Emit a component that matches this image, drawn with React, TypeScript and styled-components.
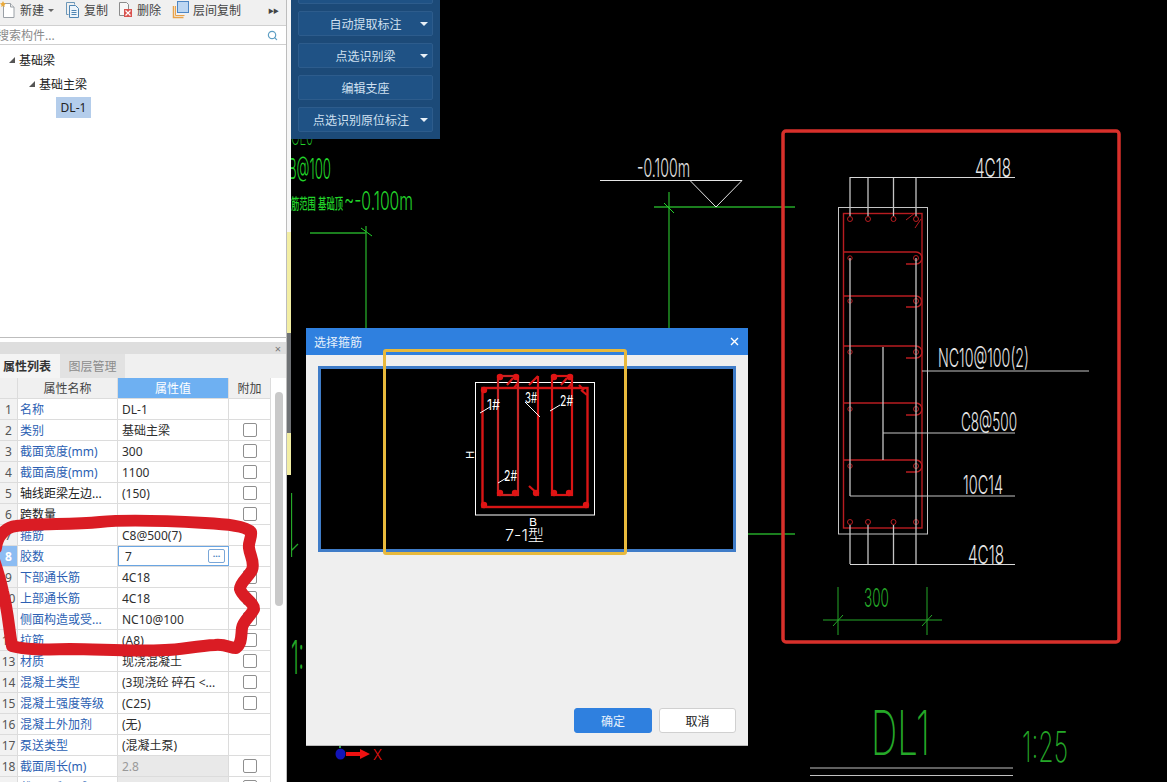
import React from "react";
import styled, { createGlobalStyle } from "styled-components";
import { Search } from "lucide-react";

const UI_FONT = `"Noto Sans", "Noto Sans CJK SC", sans-serif`;
const CAD_FONT = `Inter, "Noto Sans CJK SC", sans-serif`;

const GlobalStyle = createGlobalStyle`
  html, body {
    margin: 0;
    padding: 0;
    width: 1167px;
    height: 782px;
    overflow: hidden;
    background: #000;
    font-family: ${UI_FONT};
    font-size: 12px;
  }
`;

const Page = styled.div`
  position: relative;
  display: flex;
  width: 1167px;
  height: 782px;
  overflow: hidden;
`;

const Sidebar = styled.aside`
  width: 287px;
  height: 782px;
  flex: none;
  display: flex;
  flex-direction: column;
  box-sizing: border-box;
  border-right: 1px solid #bdbdbd;
  background: #fff;
  color: #333;
`;

const Splitter = styled.div`
  width: 4px;
  flex: none;
  background: linear-gradient(
    to bottom,
    #f6f6f6 0 232px,
    #f3eea4 232px 333px,
    #6f7275 333px 433px,
    #f3eea4 433px 475px,
    #000 475px
  );
`;

const Toolbar = styled.div`
  height: 25px;
  flex: none;
  display: flex;
  align-items: center;
  background: #f0f0f0;
  border-bottom: 1px solid #d0d0d0;
`;

const ToolButton = styled.div<{ $width: number }>`
  width: ${(p) => p.$width}px;
  height: 20px;
  margin-bottom: 5px;
  flex: none;
  display: flex;
  align-items: center;
  gap: 3px;
  color: #444;
  white-space: nowrap;
`;

const Caret = styled.span`
  width: 0;
  height: 0;
  margin-left: 1px;
  border-left: 3px solid transparent;
  border-right: 3px solid transparent;
  border-top: 3px solid #666;
`;

const MoreMark = styled.span`
  margin-left: auto;
  margin-right: 8px;
  margin-bottom: 5px;
  font-size: 6px;
  letter-spacing: -1px;
  color: #444;
`;

const SearchRow = styled.div`
  height: 18px;
  flex: none;
  display: flex;
  align-items: center;
  justify-content: space-between;
  padding-right: 8px;
  border-bottom: 1px solid #cfcfcf;
  color: #8a8a8a;
  text-indent: -3px;
`;

const TreePanel = styled.div`
  flex: 1;
  padding-top: 3px;
  border-bottom: 1px solid #bdbdbd;
`;

const TreeRow = styled.div<{ $indent: number }>`
  height: 24px;
  display: flex;
  align-items: center;
  gap: 4px;
  padding-left: ${(p) => p.$indent}px;
  color: #222;
`;

const Twist = styled.span`
  width: 6px;
  height: 6px;
  background: #555;
  clip-path: polygon(100% 0, 100% 100%, 0 100%);
`;

const SelectedNode = styled.span`
  height: 21px;
  width: 35px;
  margin-left: 56px;
  margin-bottom: 1px;
  display: flex;
  align-items: center;
  justify-content: center;
  background: #b4cdeb;
  color: #222;
`;

const PropertyPanel = styled.section`
  height: 440px;
  margin-top: 4px;
  flex: none;
  display: flex;
  flex-direction: column;
  overflow: hidden;
`;

const PanelHead = styled.div`
  height: 12px;
  flex: none;
  display: flex;
  align-items: center;
  justify-content: flex-end;
  padding-right: 5px;
  background: #dedede;
  color: #777;
  font-size: 11px;
`;

const Tabs = styled.div`
  height: 24px;
  flex: none;
  display: flex;
  background: #f0f0f0;
`;

const Tab = styled.div<{ $active?: boolean }>`
  width: ${(p) => (p.$active ? 60 : 65)}px;
  display: flex;
  align-items: center;
  justify-content: ${(p) => (p.$active ? "flex-start" : "center")};
  padding-left: ${(p) => (p.$active ? 3 : 0)}px;
  box-sizing: border-box;
  background: ${(p) => (p.$active ? "#f4f4f4" : "#e2e2e2")};
  color: ${(p) => (p.$active ? "#333" : "#8c8c8c")};
  font-weight: ${(p) => (p.$active ? 700 : 400)};
`;

const TableWrap = styled.div`
  position: relative;
  flex: 1;
  background: #fff;
`;

const Row = styled.div`
  width: 271px;
  height: 21px;
  display: grid;
  grid-template-columns: 18px 100px 111px 42px;
  box-sizing: border-box;
  border-bottom: 1px solid #dcdcdc;
`;

const Cell = styled.div`
  display: flex;
  align-items: center;
  overflow: hidden;
  white-space: nowrap;
  box-sizing: border-box;
  border-right: 1px solid #dcdcdc;
`;

const HeadCell = styled(Cell)<{ $active?: boolean }>`
  justify-content: center;
  background: ${(p) => (p.$active ? "#6eb0f2" : "#f0f0f0")};
  color: ${(p) => (p.$active ? "#fff" : "#444")};
`;

const IndexCell = styled(Cell)<{ $active?: boolean }>`
  justify-content: center;
  background: ${(p) => (p.$active ? "#8cbcf2" : "#f2f2f2")};
  color: ${(p) => (p.$active ? "#fff" : "#555")};
  font-weight: ${(p) => (p.$active ? 700 : 400)};
`;

const NameCell = styled(Cell)<{ $plain?: boolean }>`
  padding-left: 2px;
  color: ${(p) => (p.$plain ? "#222" : "#2c5fb3")};
`;

const ValueCell = styled(Cell)<{ $disabled?: boolean }>`
  padding-left: 4px;
  background: ${(p) => (p.$disabled ? "#e9e9e9" : "#fff")};
  color: ${(p) => (p.$disabled ? "#999" : "#2e2e2e")};
`;

const EditCell = styled(ValueCell)`
  padding-left: 6px;
  justify-content: space-between;
  padding-right: 3px;
  border: 1px solid #6aa5e2;
`;

const EllipsisButton = styled.span`
  width: 15px;
  height: 12px;
  display: flex;
  align-items: center;
  justify-content: center;
  border: 1px solid #7aa7d8;
  border-radius: 2px;
  color: #4a83c0;
  font-size: 9px;
  font-weight: 700;
  line-height: 8px;
`;

const AttachCell = styled(Cell)`
  justify-content: center;
`;

const CheckBox = styled.span`
  width: 12px;
  height: 12px;
  border: 1px solid #8f8f8f;
  border-radius: 2px;
  background: #fff;
`;

const ScrollThumb = styled.div`
  position: absolute;
  left: 275px;
  top: 14px;
  width: 8px;
  height: 214px;
  border-radius: 4px;
  background: #c9c9c9;
`;

const Canvas = styled.main`
  position: relative;
  flex: 1;
  background: #000;
`;

const CadSheet = styled.svg`
  display: block;
  width: 876px;
  height: 782px;
`;

const CommandPanel = styled.div`
  position: absolute;
  left: 0;
  top: 0;
  width: 149px;
  height: 139px;
  box-sizing: border-box;
  padding: 0 7px 7px;
  display: flex;
  flex-direction: column;
  justify-content: flex-end;
  gap: 7px;
  overflow: hidden;
  background: #1c4a78;
`;

const CommandButton = styled.div<{ $nudge?: number }>`
  position: relative;
  height: 25px;
  flex: none;
  display: flex;
  align-items: center;
  justify-content: center;
  box-sizing: border-box;
  padding-right: ${(p) => p.$nudge ?? 0}px;
  border: 1px solid #2d5c8c;
  border-radius: 2px;
  background: #1f5285;
  color: #cfe0f0;
`;

const CommandCaret = styled.span`
  position: absolute;
  right: 4px;
  top: 10px;
  width: 0;
  height: 0;
  border-left: 4px solid transparent;
  border-right: 4px solid transparent;
  border-top: 4px solid #e8f0f8;
`;

const Dialog = styled.div`
  position: absolute;
  left: 15px;
  top: 328px;
  width: 442px;
  height: 417px;
  display: flex;
  flex-direction: column;
  background: #efefef;
  box-shadow: 0 1px 0 #bbb;
`;

const DialogTitle = styled.div`
  height: 27px;
  flex: none;
  display: flex;
  align-items: center;
  justify-content: space-between;
  padding: 0 9px 0 8px;
  background: #2f80df;
  color: #e6f0fb;
`;

const DialogBody = styled.div`
  flex: 1;
  display: flex;
  flex-direction: column;
  padding: 11px 12px 12px;
`;

const Preview = styled.div`
  height: 186px;
  box-sizing: border-box;
  border: 3px solid #3f7cc8;
  background: #000;
`;

const PreviewSheet = styled.svg`
  display: block;
  width: 412px;
  height: 180px;
`;

const DialogActions = styled.div`
  margin-top: auto;
  display: flex;
  justify-content: flex-end;
  gap: 7px;
`;

const ActionButton = styled.button<{ $primary?: boolean }>`
  width: ${(p) => (p.$primary ? 78 : 77)}px;
  height: 25px;
  padding: 0;
  box-sizing: border-box;
  border: 1px solid ${(p) => (p.$primary ? "#2f80df" : "#d0d0d0")};
  border-radius: 3px;
  background: ${(p) => (p.$primary ? "#2f80df" : "#fff")};
  color: ${(p) => (p.$primary ? "#e8f2fc" : "#222")};
  font-family: ${UI_FONT};
  font-size: 12px;
`;

const OrangeMark = styled.div`
  position: absolute;
  left: 92px;
  top: 349px;
  width: 244px;
  height: 206px;
  box-sizing: border-box;
  border: 3px solid #e8b93c;
  border-radius: 3px;
  pointer-events: none;
`;

const InkLayer = styled.svg`
  position: absolute;
  left: 0;
  top: 0;
  width: 1167px;
  height: 782px;
  pointer-events: none;
`;

type PropRow = {
  no: number;
  name: string;
  value: string;
  check?: boolean;
  plain?: boolean;
  disabled?: boolean;
  editing?: boolean;
};

const rows: PropRow[] = [
  { no: 1, name: "名称", value: "DL-1" },
  { no: 2, name: "类别", value: "基础主梁", check: true },
  { no: 3, name: "截面宽度(mm)", value: "300", check: true },
  { no: 4, name: "截面高度(mm)", value: "1100", check: true },
  { no: 5, name: "轴线距梁左边...", value: "(150)", check: true, plain: true },
  { no: 6, name: "跨数量", value: "", check: true, plain: true },
  { no: 7, name: "箍筋", value: "C8@500(7)" },
  { no: 8, name: "胶数", value: "7", editing: true },
  { no: 9, name: "下部通长筋", value: "4C18", check: true },
  { no: 10, name: "上部通长筋", value: "4C18", check: true },
  { no: 11, name: "侧面构造或受...", value: "NC10@100", check: true },
  { no: 12, name: "拉筋", value: "(A8)", check: true },
  { no: 13, name: "材质", value: "现浇混凝土", check: true },
  { no: 14, name: "混凝土类型", value: "(3现浇砼 碎石 <...", check: true },
  { no: 15, name: "混凝土强度等级", value: "(C25)", check: true },
  { no: 16, name: "混凝土外加剂", value: "(无)" },
  { no: 17, name: "泵送类型", value: "(混凝土泵)" },
  { no: 18, name: "截面周长(m)", value: "2.8", check: true, disabled: true },
  { no: 19, name: "截面面积(m²)", value: "0.33", check: true, disabled: true },
];

const GREEN = "#25a828";
const BRIGHT = "#22d42a";
const GREY = "#c4c4c4";
const RED = "#b81c20";

// CAD lettering is tall and narrow, so every label is squeezed to its measured width
const Label: React.FC<{
  x: number;
  y: number;
  w: number;
  size: number;
  color: string;
  weight?: number;
  children: React.ReactNode;
}> = ({ x, y, w, size, color, weight = 200, children }) => (
  <text
    x={x}
    y={y}
    textLength={w}
    lengthAdjust="spacingAndGlyphs"
    fontSize={size}
    fontWeight={weight}
    fill={color}
    fontFamily={CAD_FONT}
  >
    {children}
  </text>
);

const Seg: React.FC<{ d: string; color: string; width?: number }> = ({ d, color, width = 1 }) => (
  <path d={d} fill="none" stroke={color} strokeWidth={width} />
);

const NewIcon = () => (
  <svg width="17" height="18" viewBox="0 0 17 18">
    <path d="M3.5 2.5h7l3.5 3.5v10.5h-10.500z" fill="#fff" stroke="#9aa0a6" />
    <path d="M10.500 2.500v3.500h3.500" fill="#eee" stroke="#9aa0a6" />
    <path d="M3 0l1 2 2 .6-1.600 1.300.4 2.100-1.800-1.100-1.800 1.100.4-2.100L0 2.600 2 2z" fill="#e9a93a" />
  </svg>
);

const CopyIcon = () => (
  <svg width="16" height="18" viewBox="0 0 16 18">
    <path d="M1.500 1.500h8v2" fill="none" stroke="#6c97b8" />
    <path d="M1.500 1.500v12h2" fill="none" stroke="#6c97b8" />
    <path d="M4.500 4.500h6l3 3v9h-9z" fill="#eef5fb" stroke="#4f86b4" />
    <path d="M6.500 9.500h5M6.500 11.500h5M6.500 13.500h5" stroke="#4f86b4" />
  </svg>
);

const DeleteIcon = () => (
  <svg width="16" height="18" viewBox="0 0 16 18">
    <path d="M1.500 1.500h7l2 2v11h-9z" fill="#f7f7f7" stroke="#8b8b8b" />
    <rect x="6" y="8" width="8" height="8" fill="#d9534f" />
    <path d="M7.500 9.500l5 5M12.500 9.500l-5 5" stroke="#fff" strokeWidth="1.200" />
  </svg>
);

const FloorCopyIcon = () => (
  <svg width="18" height="20" viewBox="0 0 18 20">
    <path d="M1.500 6v11.500h10" fill="none" stroke="#e8a24a" strokeWidth="1.500" />
    <path d="M3.500 6v9.500h9" fill="none" stroke="#e8a24a" />
    <rect x="5.500" y="1.500" width="11" height="11" fill="#bcd6f2" stroke="#4d86c4" />
  </svg>
);

const CadDrawing = () => {
  const bars = [850, 868, 893.5, 916];
  const stirrupY = [252, 296, 346, 403, 460];
  const tieY = [258, 301, 352, 409, 466];
  return (
    <CadSheet viewBox="291 0 876 782">
      {/* left fragments in green */}
      <Label x={291} y={145} w={22} size={24} color={BRIGHT}>CL0</Label>
      <Label x={288} y={179} w={43} size={28} color={BRIGHT} weight={300}>B@100</Label>
      <Label x={291} y={209} w={52} size={15} color={BRIGHT} weight={500}>筋范围 基础顶</Label>
      <Label x={344} y={210} w={69} size={25} color={BRIGHT} weight={300}>~-0.100m</Label>
      <Seg d="M310 233H366M366 226V328" color={GREEN} width={1.300} />
      <Seg d="M361 228L372 236" color={BRIGHT} />
      <Seg d="M654 207H795M669 192V328" color={GREEN} width={1.300} />
      <Seg d="M664 203L674 213" color={BRIGHT} />
      <Seg d="M748 534H795" color={GREEN} width={1.300} />
      <Seg d="M291.500 493V557M291 551L298 544" color={GREEN} width={1.300} />
      <Label x={291} y={674} w={13} size={46} color={GREEN} weight={300}>1:</Label>

      {/* level mark */}
      <Label x={637} y={177} w={53} size={25} color="#e0e0e0" weight={300}>-0.100m</Label>
      <Seg d="M600 180.500H742L716 207L690 180.500" color="#e6e6e6" />

      {/* beam section */}
      <rect x="783" y="131" width="336" height="511" rx="3" fill="none" stroke="#d8302b" strokeWidth="3.500" />
      <rect x="838.500" y="207.500" width="89" height="326.500" fill="none" stroke={GREY} />
      <rect x="843.500" y="213.500" width="78.500" height="314.500" fill="none" stroke={RED} strokeWidth="1.400" />
      {bars.map((x) => (
        <React.Fragment key={x}>
          <Seg d={`M${x} 177V216M${x} 525V564`} color={GREY} width={1.300} />
          <circle cx={x} cy={219} r="2.500" fill="none" stroke={RED} />
          <circle cx={x} cy={522} r="2.500" fill="none" stroke={RED} />
        </React.Fragment>
      ))}
      <Seg d="M850 177.500H1015M850 564.500H1015" color="#d8d8d8" />
      <Seg d="M906 220L915 213M915 228L921 219" color={RED} />
      {stirrupY.map((y, i) => {
        const end = tieY[i] + 6;
        const radius = (end - y) / 2;
        return (
          <React.Fragment key={y}>
            <path
              d={`M844 ${y}H916A${radius} ${radius} 0 0 1 916 ${end}H906`}
              fill="none"
              stroke={RED}
              strokeWidth="1.400"
            />
            <circle cx={850} cy={tieY[i]} r="2.200" fill="none" stroke={RED} />
            <circle cx={916} cy={tieY[i]} r="2.500" fill="none" stroke={RED} />
          </React.Fragment>
        );
      })}
      <Seg d="M850 258V496M916 258V525M883 347V460" color={GREY} width={1.300} />
      <Seg d="M922 371H1089M883 433H1015M850 496H1015" color={GREY} />
      <Label x={975} y={177} w={36} size={26} color="#e6e6e6" weight={300}>4C18</Label>
      <Label x={938} y={367} w={91} size={26} color="#e6e6e6" weight={300}>NC10@100(2)</Label>
      <Label x={961} y={431} w={56} size={26} color="#e6e6e6" weight={300}>C8@500</Label>
      <Label x={963} y={494} w={40} size={26} color="#e6e6e6" weight={300}>10C14</Label>
      <Label x={968} y={564} w={36} size={26} color="#e6e6e6" weight={300}>4C18</Label>

      {/* dimension */}
      <Seg d="M838 587V635M927 587V635M823 620H942M833 626L843 615M922 626L932 615" color={GREEN} />
      <Label x={864} y={607} w={25} size={26} color={GREEN} weight={300}>300</Label>

      {/* title */}
      <Label x={871} y={755} w={59} size={62} color={GREEN} weight={200}>DL1</Label>
      <Label x={1022} y={762} w={46} size={42} color={GREEN} weight={200}>1:25</Label>
      <Seg d="M810 768H1013M810 775.500H1013" color="#c0c0c0" />

      {/* axis */}
      <ellipse cx="340.500" cy="754" rx="5" ry="5.500" fill="#1214b8" />
      <path d="M340 748V744" stroke="#3aa04a" strokeWidth="2" />
      <path d="M346 752H360V749L370 754L360 759V756H346z" fill="#ee1111" />
      <Label x={373} y={760} w={9} size={15} color="#ee1111" weight={300}>X</Label>
    </CadSheet>
  );
};

const StirrupPreview = () => (
  <PreviewSheet viewBox="321 369 412 180">
    <rect x="475.500" y="382.500" width="119" height="132.500" fill="none" stroke="#fff" />
    <rect x="482.500" y="388" width="105" height="119" fill="none" stroke="#d81515" strokeWidth="2.400" />
    <rect x="498" y="376" width="20" height="119" fill="none" stroke="#c72525" strokeWidth="2.200" />
    <rect x="552" y="376" width="20" height="119" fill="none" stroke="#d81515" strokeWidth="2.200" />
    <path d="M538 376V494L529 486M538 376L529 385" fill="none" stroke="#d81515" strokeWidth="2.200" />
    <path d="M507 385L513 378M514 388L518 383M561 385L567 378M568 388L572 383M584 390L579 385M587 395L581 390" stroke="#d81515" strokeWidth="2.200" />
    {[
      [484, 390],
      [484, 505],
      [586, 505],
      [500, 377],
      [516, 377],
      [554, 377],
      [570, 377],
      [500, 493],
      [515, 493],
      [554, 493],
      [569, 493],
      [536, 493],
    ].map(([cx, cy]) => (
      <circle key={`${cx}-${cy}`} cx={cx} cy={cy} r="3.200" fill="#e01414" />
    ))}
    <Seg d="M480 413L490 407M498 483L508 477M550 411L560 405M525 402L540 417" color="#fff" />
    <Label x={487} y={410} w={13} size={14} color="#fff" weight={400}>1#</Label>
    <Label x={504} y={481} w={13} size={14} color="#fff" weight={400}>2#</Label>
    <Label x={525} y={403} w={12} size={14} color="#fff" weight={400}>3#</Label>
    <Label x={560} y={406} w={13} size={14} color="#fff" weight={400}>2#</Label>
    <text x={474} y={455} transform="rotate(-90 474 455)" textAnchor="middle" fontSize={11} fill="#fff" fontFamily={CAD_FONT}>H</text>
    <Label x={529} y={526} w={8} size={11} color="#fff" weight={400}>B</Label>
    <Label x={505} y={541} w={39} size={16} color="#fff" weight={300}>7-1型</Label>
  </PreviewSheet>
);

export default function App() {
  return (
    <Page>
      <GlobalStyle />
      <Sidebar>
        <Toolbar>
          <ToolButton $width={65}>
            <NewIcon />
            新建
            <Caret />
          </ToolButton>
          <ToolButton $width={53}>
            <CopyIcon />
            复制
          </ToolButton>
          <ToolButton $width={54}>
            <DeleteIcon />
            删除
          </ToolButton>
          <ToolButton $width={70}>
            <FloorCopyIcon />
            层间复制
          </ToolButton>
          <MoreMark>▶▶</MoreMark>
        </Toolbar>
        <SearchRow>
          <span>搜索构件...</span>
          <Search size={11} color="#5f9fc4" strokeWidth={2.6} />
        </SearchRow>
        <TreePanel>
          <TreeRow $indent={9}>
            <Twist />
            基础梁
          </TreeRow>
          <TreeRow $indent={29}>
            <Twist />
            基础主梁
          </TreeRow>
          <TreeRow $indent={0}>
            <SelectedNode>DL-1</SelectedNode>
          </TreeRow>
        </TreePanel>
        <PropertyPanel>
          <PanelHead>×</PanelHead>
          <Tabs>
            <Tab $active>属性列表</Tab>
            <Tab>图层管理</Tab>
          </Tabs>
          <TableWrap>
            <Row>
              <HeadCell />
              <HeadCell>属性名称</HeadCell>
              <HeadCell $active>属性值</HeadCell>
              <HeadCell>附加</HeadCell>
            </Row>
            {rows.map((row) => (
              <Row key={row.no}>
                <IndexCell $active={row.editing}>{row.no}</IndexCell>
                <NameCell $plain={row.plain}>{row.name}</NameCell>
                {row.editing ? (
                  <EditCell>
                    {row.value}
                    <EllipsisButton>···</EllipsisButton>
                  </EditCell>
                ) : (
                  <ValueCell $disabled={row.disabled}>{row.value}</ValueCell>
                )}
                <AttachCell>{row.check && <CheckBox />}</AttachCell>
              </Row>
            ))}
            <ScrollThumb />
          </TableWrap>
        </PropertyPanel>
      </Sidebar>
      <Splitter />
      <Canvas>
        <CadDrawing />
        <CommandPanel>
          <CommandButton />
          <CommandButton>
            自动提取标注
            <CommandCaret />
          </CommandButton>
          <CommandButton>
            点选识别梁
            <CommandCaret />
          </CommandButton>
          <CommandButton>编辑支座</CommandButton>
          <CommandButton $nudge={9}>
            点选识别原位标注
            <CommandCaret />
          </CommandButton>
        </CommandPanel>
        <Dialog>
          <DialogTitle>
            选择箍筋
            <svg width="9" height="9" viewBox="0 0 9 9">
              <path d="M1 1l7 7M8 1l-7 7" stroke="#fff" strokeWidth="1.400" />
            </svg>
          </DialogTitle>
          <DialogBody>
            <Preview>
              <StirrupPreview />
            </Preview>
            <DialogActions>
              <ActionButton $primary>确定</ActionButton>
              <ActionButton>取消</ActionButton>
            </DialogActions>
          </DialogBody>
        </Dialog>
        <OrangeMark />
      </Canvas>
      <InkLayer viewBox="0 0 1167 782">
        <path
          d="M-4 548C-3 536 6 527 16 526C40 523 70 525 100 522C130 519 170 521 205 523C225 524 246 526 251 532C252 538 248 542 249 548C250 556 255 562 252 570C248 578 240 582 240 589C242 597 254 602 254 609C250 617 243 621 242 628C241 636 242 644 236 648C230 648 226 644 215 645C195 646 180 650 165 650C130 652 100 649 70 649C45 650 25 650 12 646C9 630 8 610 3 592C0 578 -4 566 -6 560"
          fill="none"
          stroke="#da1c24"
          strokeWidth="12"
          strokeLinecap="round"
          strokeLinejoin="round"
        />
      </InkLayer>
    </Page>
  );
}
